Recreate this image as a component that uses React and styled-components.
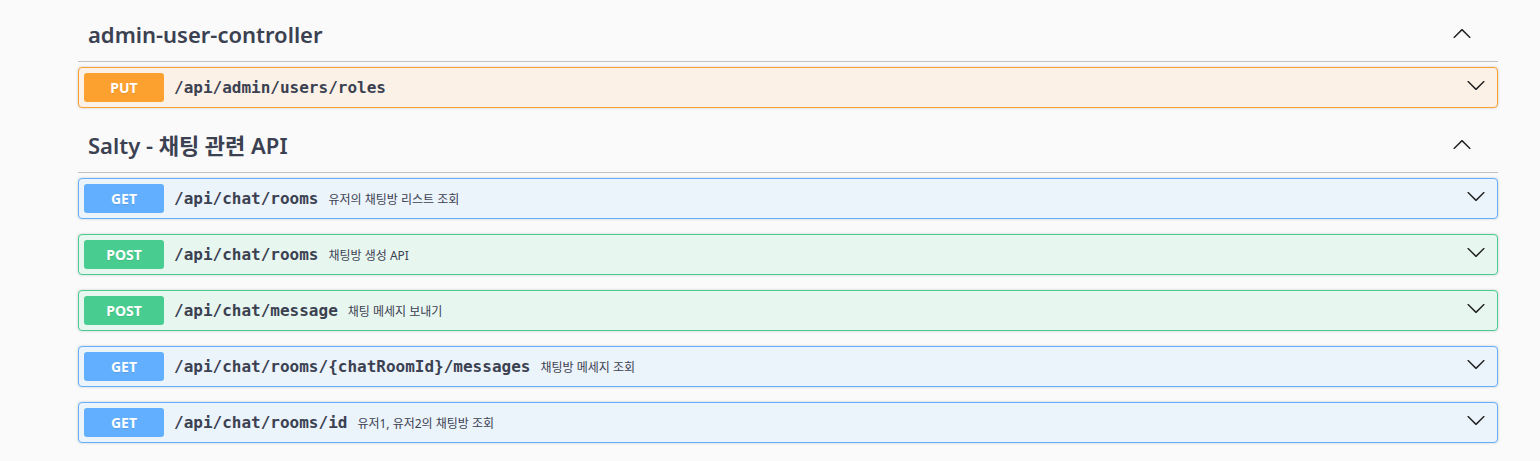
import styled, { createGlobalStyle } from "styled-components";

const GlobalStyle = createGlobalStyle`
  html, body {
    margin: 0;
    padding: 0;
    background: #fafafa;
  }
  body {
    font-family: "Noto Sans", "Noto Sans CJK KR", sans-serif;
    color: #3b4151;
  }
`;

const methods = {
  GET: { color: "#61affe", bg: "#ebf3fb" },
  POST: { color: "#49cc90", bg: "#e8f6f0" },
  PUT: { color: "#fca130", bg: "#fbf1e6" },
};

const sections = [
  {
    name: "admin-user-controller",
    ops: [{ method: "PUT", path: "/api/admin/users/roles", desc: "" }],
  },
  {
    name: "Salty - 채팅 관련 API",
    ops: [
      { method: "GET", path: "/api/chat/rooms", desc: "유저의 채팅방 리스트 조회" },
      { method: "POST", path: "/api/chat/rooms", desc: "채팅방 생성 API" },
      { method: "POST", path: "/api/chat/message", desc: "채팅 메세지 보내기" },
      { method: "GET", path: "/api/chat/rooms/{chatRoomId}/messages", desc: "채팅방 메세지 조회" },
      { method: "GET", path: "/api/chat/rooms/id", desc: "유저1, 유저2의 채팅방 조회" },
    ],
  },
];

function Arrow({ up }) {
  return (
    <ArrowSvg viewBox="0 0 20 20" $up={up}>
      <path d="M17.418 6.109c.272-.268.709-.268.979 0s.271.701 0 .969l-7.908 7.83c-.27.268-.707.268-.979 0l-7.908-7.83c-.27-.268-.27-.701 0-.969.271-.268.709-.268.979 0L10 13.25l7.418-7.141z" />
    </ArrowSvg>
  );
}

export default function App() {
  return (
    <>
      <GlobalStyle />
      <Page>
        {sections.map((section) => (
          <Section key={section.name}>
            <TagHeading>
              <TagName>{section.name}</TagName>
              <Arrow up />
            </TagHeading>
            {section.ops.map((op) => (
              <Opblock key={op.method + op.path} $method={op.method}>
                <Method $method={op.method}>{op.method}</Method>
                <Path>{op.path}</Path>
                <Description>{op.desc}</Description>
                <Arrow />
              </Opblock>
            ))}
          </Section>
        ))}
      </Page>
    </>
  );
}

const Page = styled.div`
  padding: 13px 42px 0 78px;
`;

const Section = styled.div`
  display: flex;
  flex-direction: column;
  & + & {
    margin-top: 1px;
  }
`;

const TagHeading = styled.h3`
  display: flex;
  align-items: center;
  margin: 0 0 5px;
  padding: 7px 20px 13px 10px;
  min-height: 28px;
  border-bottom: 1px solid rgba(59, 65, 81, 0.3);
  font-size: 22px;
  font-weight: 600;
  color: #3b4151;
`;

const TagName = styled.span`
  flex: 1;
  line-height: 28px;
`;

const ArrowSvg = styled.svg`
  width: 20px;
  height: 20px;
  flex: none;
  fill: #222;
  margin-right: 6px;
  margin-bottom: ${(p) => (p.$up ? "0" : "5px")};
  transform: ${(p) => (p.$up ? "rotate(180deg)" : "none")};
`;

const Opblock = styled.div`
  display: flex;
  align-items: center;
  padding: 5px;
  margin: 0 0 15px;
  border: 1px solid ${(p) => methods[p.$method].color};
  border-radius: 4px;
  background: ${(p) => methods[p.$method].bg};
  box-shadow: 0 0 3px rgba(0, 0, 0, 0.19);
`;

const Method = styled.span`
  min-width: 80px;
  padding: 6px 0;
  border-radius: 3px;
  background: ${(p) => methods[p.$method].color};
  color: #fff;
  font-size: 14px;
  line-height: 17px;
  font-weight: 700;
  text-align: center;
  text-shadow: 0 1px 0 rgba(0, 0, 0, 0.1);
`;

const Path = styled.span`
  padding: 0 10px;
  font-family: "DejaVu Sans Mono", monospace;
  font-size: 16px;
  font-weight: 700;
  color: #3b4151;
`;

const Description = styled.span`
  flex: 1;
  font-size: 12px;
  color: #3b4151;
`;
